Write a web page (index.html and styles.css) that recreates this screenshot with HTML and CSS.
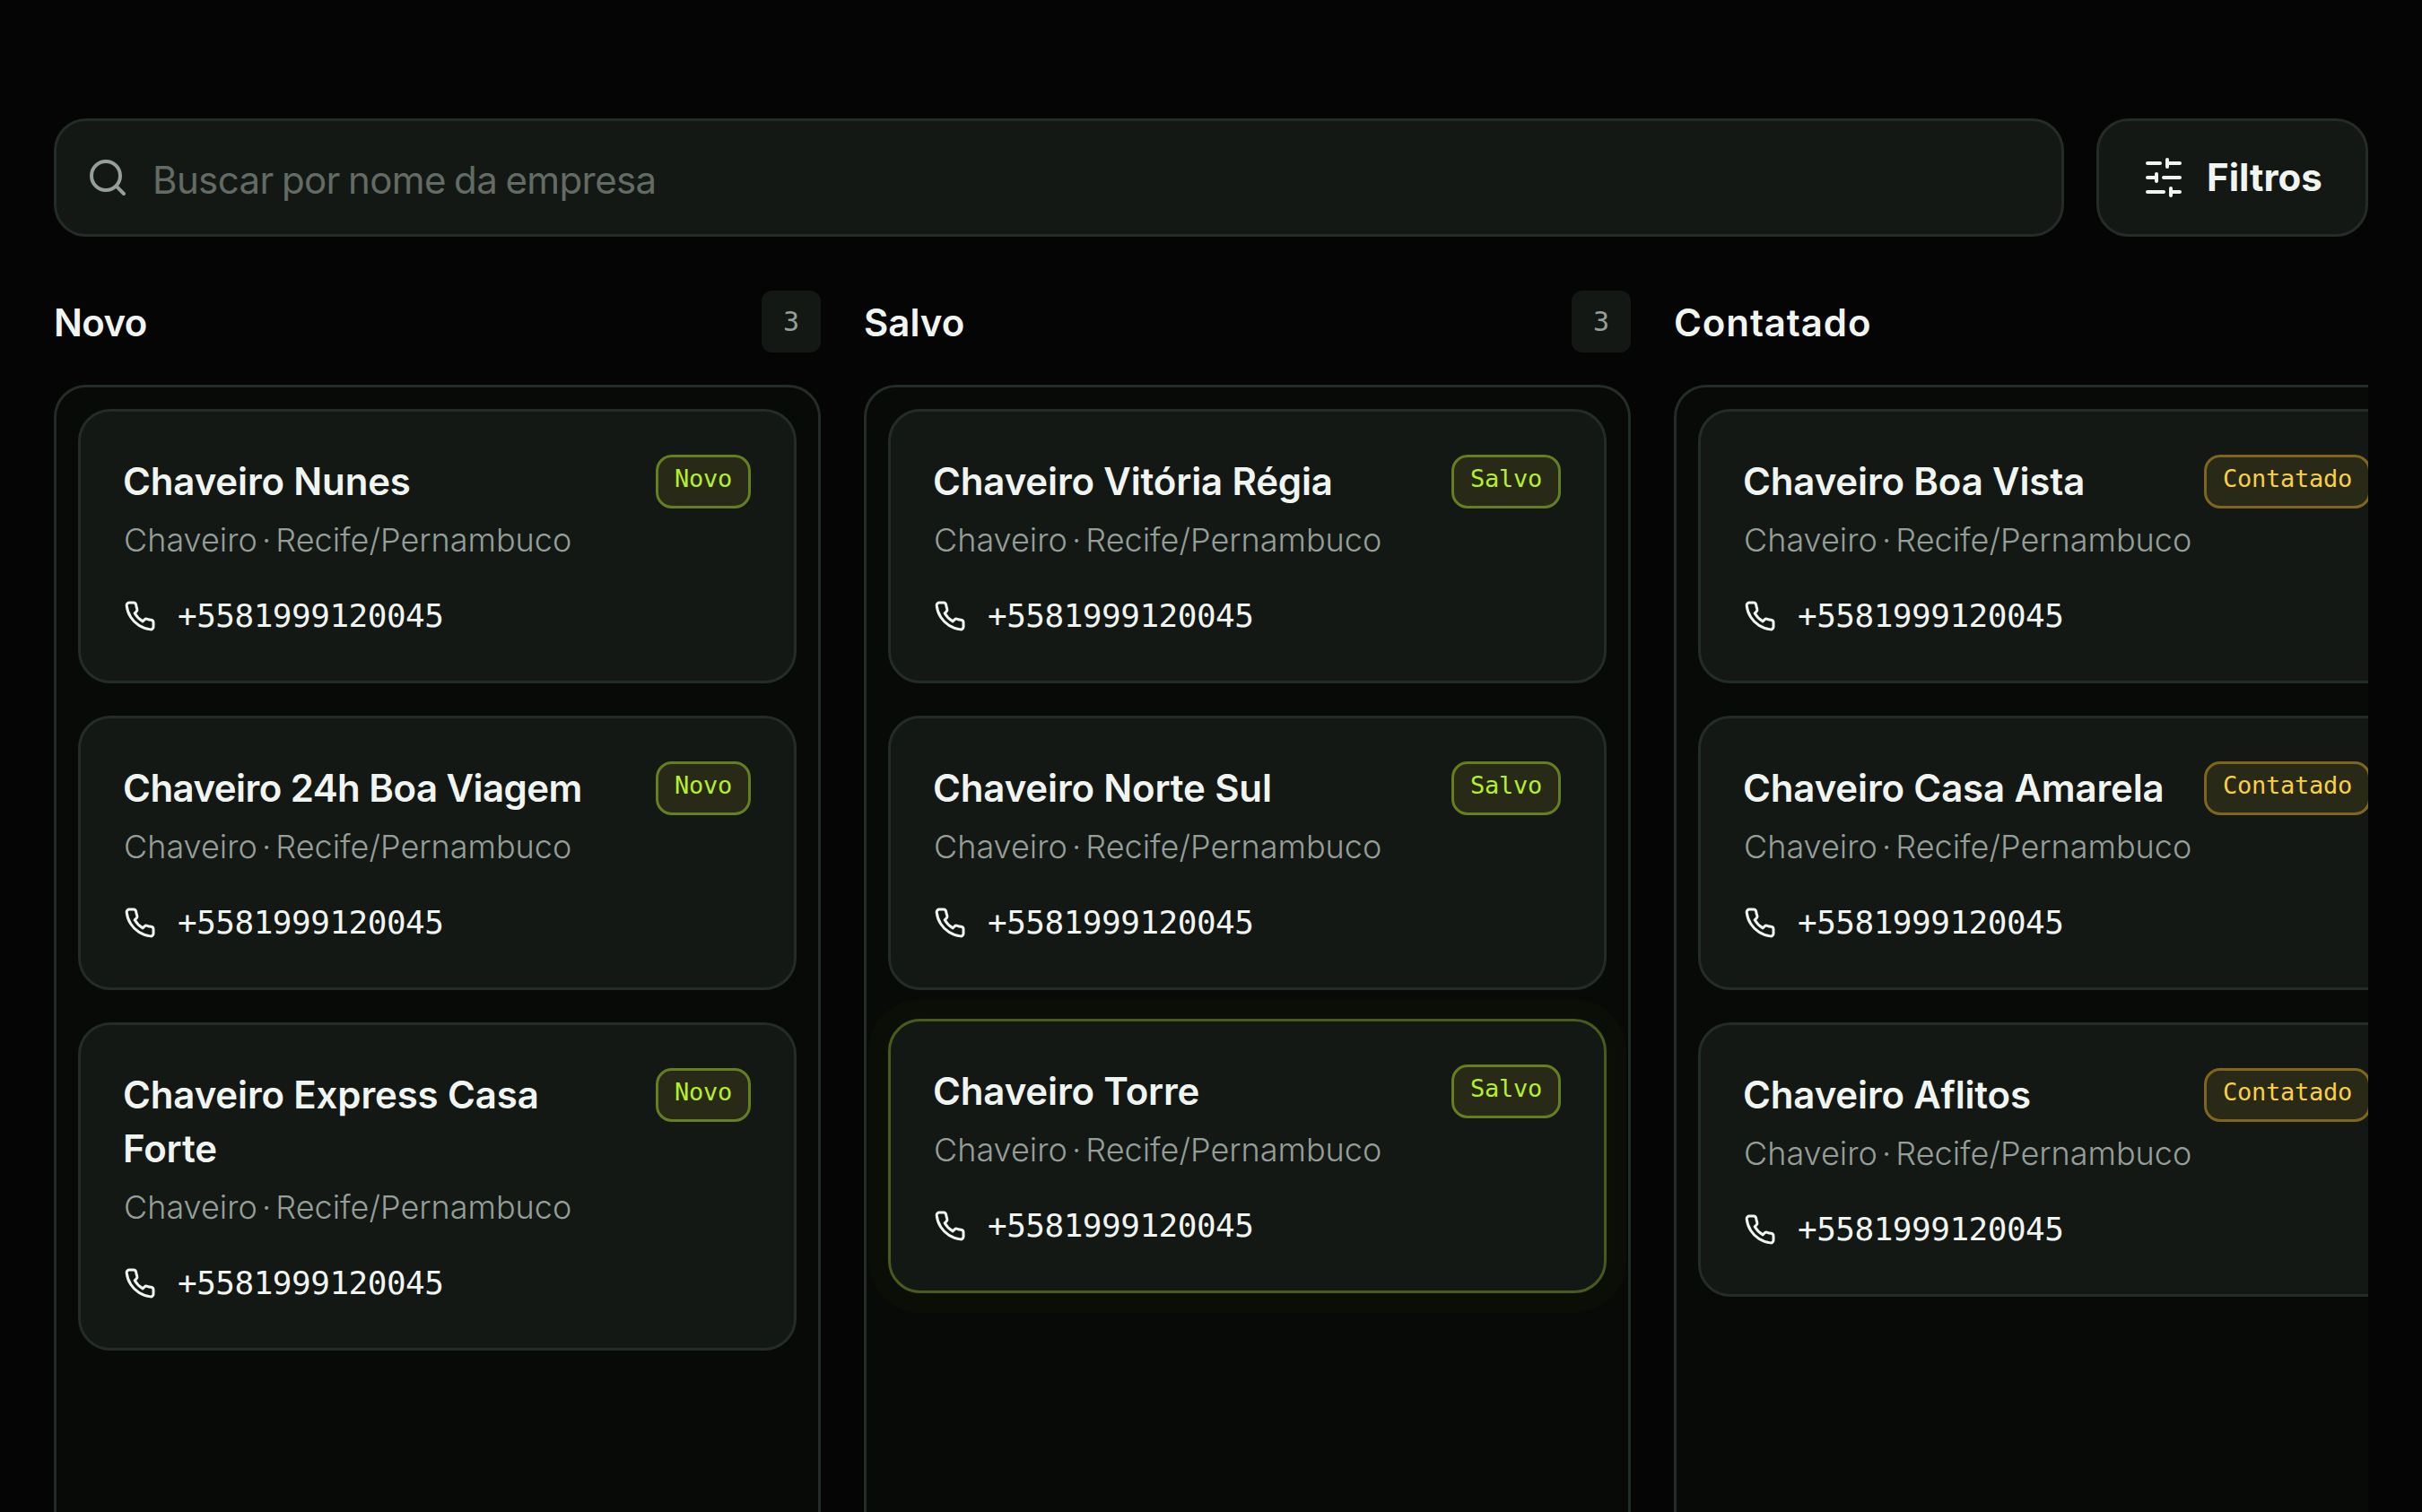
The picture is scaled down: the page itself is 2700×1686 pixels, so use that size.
FILE: index.html
```
<!DOCTYPE html>
<html lang="pt-BR">
<head>
<meta charset="utf-8">
<title>Leads</title>
<link rel="stylesheet" href="styles.css">
</head>
<body>
<svg class="sprite" aria-hidden="true">
  <symbol id="phone" viewBox="0 0 24 24"><path d="M22 16.92v3a2 2 0 0 1-2.18 2 19.79 19.79 0 0 1-8.63-3.07 19.5 19.5 0 0 1-6-6 19.79 19.79 0 0 1-3.07-8.67A2 2 0 0 1 4.11 2h3a2 2 0 0 1 2 1.72 12.84 12.84 0 0 0 .7 2.81 2 2 0 0 1-.45 2.11L8.09 9.91a16 16 0 0 0 6 6l1.27-1.27a2 2 0 0 1 2.11-.45 12.84 12.84 0 0 0 2.81.7A2 2 0 0 1 22 16.92z"/></symbol>
</svg>
<main class="page">
  <div class="toolbar">
    <label class="search">
      <svg class="icon" viewBox="0 0 24 24"><circle cx="11" cy="11" r="8"/><path d="m21 21-4.3-4.3"/></svg>
      <span class="placeholder">Buscar por nome da empresa</span>
    </label>
    <button class="filters">
      <svg class="icon" viewBox="0 0 24 24"><path d="M21 4h-7M10 4H3M21 12h-9M8 12H3M21 20h-5M12 20H3M14 2v4M8 10v4M16 18v4"/></svg>
      <span>Filtros</span>
    </button>
  </div>

  <div class="board">
    <section class="column">
      <header class="column-head"><h2 class="snug">Novo</h2><span class="count">3</span></header>
      <div class="lane">
        <article class="card">
          <div class="card-top"><h3>Chaveiro Nunes</h3><span class="badge">Novo</span></div>
          <p class="meta">Chaveiro · Recife/Pernambuco</p>
          <p class="phone"><svg class="icon"><use href="#phone"/></svg><span>+5581999120045</span></p>
        </article>
        <article class="card">
          <div class="card-top"><h3 class="snug">Chaveiro 24h Boa Viagem</h3><span class="badge">Novo</span></div>
          <p class="meta">Chaveiro · Recife/Pernambuco</p>
          <p class="phone"><svg class="icon"><use href="#phone"/></svg><span>+5581999120045</span></p>
        </article>
        <article class="card">
          <div class="card-top"><h3>Chaveiro Express Casa Forte</h3><span class="badge">Novo</span></div>
          <p class="meta">Chaveiro · Recife/Pernambuco</p>
          <p class="phone"><svg class="icon"><use href="#phone"/></svg><span>+5581999120045</span></p>
        </article>
      </div>
    </section>

    <section class="column">
      <header class="column-head"><h2>Salvo</h2><span class="count">3</span></header>
      <div class="lane">
        <article class="card">
          <div class="card-top"><h3>Chaveiro Vitória Régia</h3><span class="badge">Salvo</span></div>
          <p class="meta">Chaveiro · Recife/Pernambuco</p>
          <p class="phone"><svg class="icon"><use href="#phone"/></svg><span>+5581999120045</span></p>
        </article>
        <article class="card">
          <div class="card-top"><h3>Chaveiro Norte Sul</h3><span class="badge">Salvo</span></div>
          <p class="meta">Chaveiro · Recife/Pernambuco</p>
          <p class="phone"><svg class="icon"><use href="#phone"/></svg><span>+5581999120045</span></p>
        </article>
        <article class="card card-active">
          <div class="card-top"><h3>Chaveiro Torre</h3><span class="badge">Salvo</span></div>
          <p class="meta">Chaveiro · Recife/Pernambuco</p>
          <p class="phone"><svg class="icon"><use href="#phone"/></svg><span>+5581999120045</span></p>
        </article>
      </div>
    </section>

    <section class="column">
      <header class="column-head"><h2 class="wide">Contatado</h2></header>
      <div class="lane">
        <article class="card">
          <div class="card-top"><h3>Chaveiro Boa Vista</h3><span class="badge badge-amber">Contatado</span></div>
          <p class="meta">Chaveiro · Recife/Pernambuco</p>
          <p class="phone"><svg class="icon"><use href="#phone"/></svg><span>+5581999120045</span></p>
        </article>
        <article class="card">
          <div class="card-top"><h3>Chaveiro Casa Amarela</h3><span class="badge badge-amber">Contatado</span></div>
          <p class="meta">Chaveiro · Recife/Pernambuco</p>
          <p class="phone"><svg class="icon"><use href="#phone"/></svg><span>+5581999120045</span></p>
        </article>
        <article class="card">
          <div class="card-top"><h3>Chaveiro Aflitos</h3><span class="badge badge-amber">Contatado</span></div>
          <p class="meta">Chaveiro · Recife/Pernambuco</p>
          <p class="phone"><svg class="icon"><use href="#phone"/></svg><span>+5581999120045</span></p>
        </article>
      </div>
    </section>
  </div>
</main>
</body>
</html>
```
FILE: styles.css
```
:root {
  --bg: #050505;
  --lane: #080a07;
  --surface: #141814;
  --line: #242c28;
  --text: #f1f5f1;
  --muted: #959f99;
  --lime: #b4f02c;
  --mono: "DejaVu Sans Mono", monospace;
}

* { box-sizing: border-box; margin: 0; padding: 0; }

body {
  background: var(--bg);
  color: var(--text);
  font-family: "Inter", sans-serif;
  font-size: 42px;
  line-height: 60px;
}

.sprite { display: none; }

.icon {
  width: 48px;
  height: 48px;
  flex: none;
  fill: none;
  stroke: currentColor;
  stroke-width: 2;
  stroke-linecap: round;
  stroke-linejoin: round;
}

.page {
  display: flex;
  flex-direction: column;
  gap: 60px;
  height: 1686px;
  padding: 132px 60px 0;
  overflow: hidden;
}

.toolbar { display: flex; gap: 36px; flex: none; height: 132px; }

.search,
.filters {
  display: flex;
  align-items: center;
  gap: 24px;
  background: var(--surface);
  border: 3px solid var(--line);
  border-radius: 36px;
}

.search { flex: 1; padding: 0 33px; color: var(--muted); }

.placeholder {
  padding: 5px 0 0 2px;
  color: #636b65;
  letter-spacing: -0.6px;
  word-spacing: -2px;
}

.filters {
  width: 303px;
  padding: 0 0 0 48px;
  color: var(--text);
  font: 700 42px/60px "Inter", sans-serif;
}

.board {
  display: flex;
  flex: 1;
  gap: 48px;
  min-height: 0;
  overflow: hidden;
}

.column {
  display: flex;
  flex: none;
  flex-direction: column;
  gap: 36px;
  width: 855px;
}

.column-head {
  display: flex;
  flex: none;
  align-items: center;
  justify-content: space-between;
  height: 69px;
}

h2, h3 { font-size: 42px; font-weight: 600; }
h2 { padding-top: 2px; }
h2.snug { letter-spacing: -0.6px; }
h2.wide { letter-spacing: 0.9px; }
h3 { margin-left: -1px; letter-spacing: -0.15px; }
h3.snug { letter-spacing: -0.55px; }

.count {
  padding: 0 24px;
  border-radius: 12px;
  background: var(--surface);
  color: var(--muted);
  font: 30px/69px var(--mono);
}

.lane {
  display: flex;
  flex: none;
  flex-direction: column;
  gap: 36px;
  height: 1400px;
  padding: 24px;
  background: var(--lane);
  border: 3px solid var(--line);
  border-radius: 36px;
}

.card {
  flex: none;
  padding: 48px;
  background: var(--surface);
  border: 3px solid var(--line);
  border-radius: 36px;
}

.card-active {
  border-color: #485a1c;
  box-shadow: 0 0 0 22px rgba(180, 240, 44, 0.018), 0 0 16px rgba(180, 240, 44, 0.02);
  transform: translateY(-4px);
}

.card-top {
  display: flex;
  align-items: flex-start;
  justify-content: space-between;
  gap: 36px;
}

.badge {
  flex: none;
  height: 60px;
  padding: 3px 18px 0;
  border: 3px solid #647f20;
  border-radius: 18px;
  background: #282a17;
  color: var(--lime);
  font: 27px/42px var(--mono);
  letter-spacing: -0.25px;
}

.badge-amber { border-color: #80661c; color: #fbce46; }

.meta {
  margin-top: 8px;
  color: var(--muted);
  font-size: 36px;
  font-weight: 300;
  line-height: 54px;
  word-spacing: -5px;
}

.phone {
  display: flex;
  align-items: center;
  gap: 24px;
  height: 48px;
  margin-top: 34px;
  font: 36px/48px var(--mono);
  letter-spacing: -0.5px;
}

.phone .icon { width: 36px; height: 36px; }
```
